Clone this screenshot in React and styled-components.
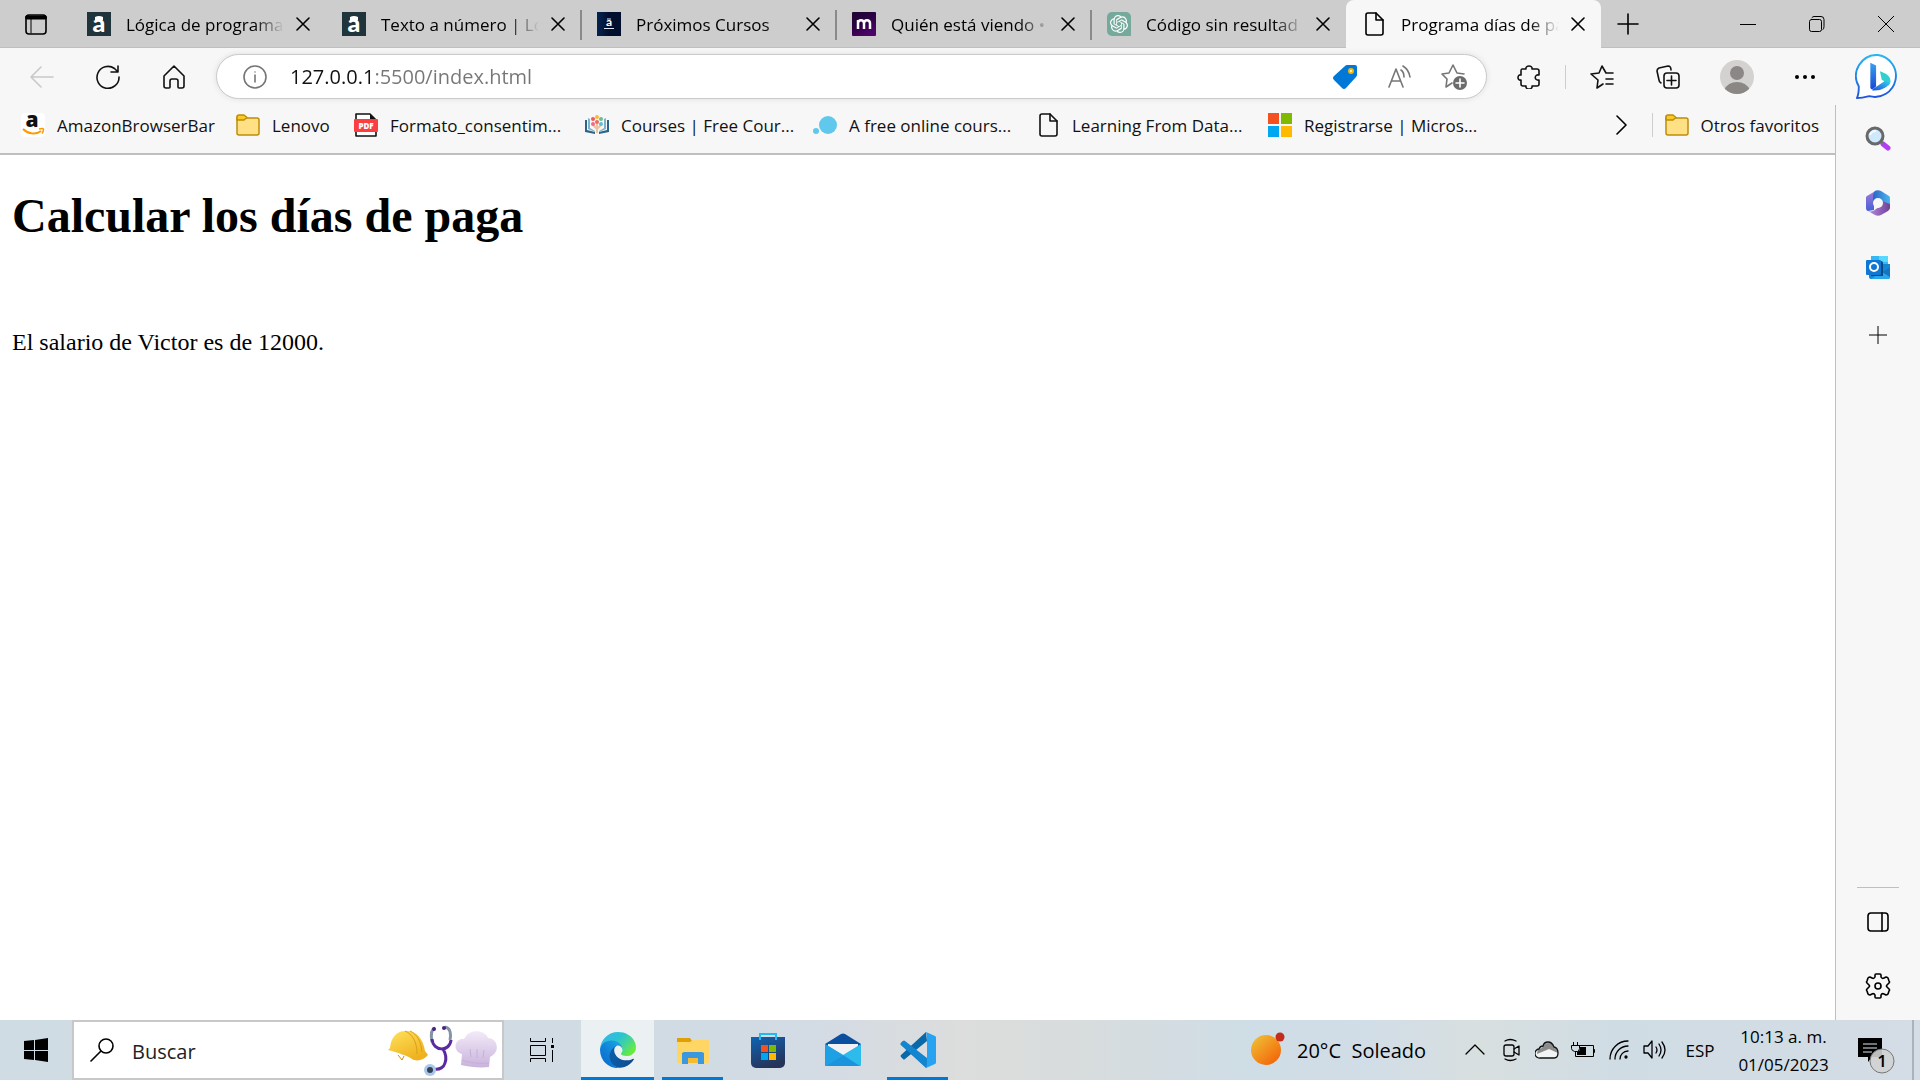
import React from "react";
import styled, { createGlobalStyle } from "styled-components";
import { SiOpenai } from "react-icons/si";

const GlobalStyle = createGlobalStyle`
  * {
    box-sizing: border-box;
  }
  body {
    margin: 0;
    font-family: "Open Sans", "Noto Sans", sans-serif;
    color: #000;
  }
  button, input {
    font: inherit;
    color: inherit;
    border: 0;
    padding: 0;
    background: none;
    outline: none;
  }
  svg {
    display: block;
    flex: none;
  }
`;

const Line = ({ size = 24, width = 1.6, children, ...rest }) => (
  <svg
    width={size}
    height={size}
    viewBox={`0 0 ${size} ${size}`}
    fill="none"
    stroke="currentColor"
    strokeWidth={width}
    strokeLinecap="round"
    strokeLinejoin="round"
    aria-hidden="true"
    {...rest}
  >
    {children}
  </svg>
);

/* ---------- favicons ---------- */

const AluraIcon = () => (
  <svg width="24" height="24" viewBox="0 0 24 24">
    <rect width="24" height="24" fill="#20343c" />
    <text x="12" y="20" textAnchor="middle" fontSize="25" fontWeight="900" fill="#fff" fontFamily="Lato, sans-serif">
      a
    </text>
    <path d="M8 5q4-2 8 0v3H8z" fill="#fff" />
  </svg>
);

const LatamIcon = () => (
  <svg width="24" height="24" viewBox="0 0 24 24">
    <defs>
      <linearGradient id="latam">
        <stop offset="0" stopColor="#052452" />
        <stop offset="0.5" stopColor="#010f2e" />
      </linearGradient>
    </defs>
    <rect width="24" height="24" fill="url(#latam)" />
    <text x="12" y="14" textAnchor="middle" fontSize="12" fontWeight="700" fill="#fff" fontFamily="Lato, sans-serif">
      a
    </text>
    <path d="M10 7h4M7 16.500h10" stroke="#dfe4ee" strokeWidth="1" />
  </svg>
);

const MIcon = () => (
  <svg width="24" height="24" viewBox="0 0 24 24">
    <defs>
      <linearGradient id="mbg" x2="0.6" y2="1">
        <stop offset="0" stopColor="#1d0530" />
        <stop offset="0.5" stopColor="#2b0142" />
        <stop offset="1" stopColor="#4d0569" />
      </linearGradient>
    </defs>
    <rect width="24" height="24" rx="1" fill="url(#mbg)" />
    <path
      d="M6 17V8M6 11.500C6 7 12 7 12 11.500V17M12 11.500C12 7 18 7 18 11.500V17"
      fill="none"
      stroke="#fff"
      strokeWidth="2.500"
    />
  </svg>
);

const GptBox = styled.span`
  display: grid;
  place-items: center;
  flex: none;
  width: 24px;
  height: 24px;
  border-radius: 5px 5px 0 5px;
  background: #75a99c;
  color: #fff;
`;

const PageIcon = () => (
  <Line>
    <path d="M6 1h8l7 7v13a2 2 0 0 1-2 2H6a2 2 0 0 1-2-2V3a2 2 0 0 1 2-2z" />
    <path d="M14 1v7h7" />
  </Line>
);

const AmazonIcon = () => (
  <svg width="24" height="24" viewBox="0 0 24 24">
    <rect width="24" height="24" rx="4" fill="#fff" />
    <text x="11" y="14" textAnchor="middle" fontSize="21" fontWeight="800" fill="#111" fontFamily="Open Sans, sans-serif">
      a
    </text>
    <path d="M2 16c5 5 13 6 18 2" fill="none" stroke="#f90" strokeWidth="2" />
    <path d="M18 16c3-1 4.500-.5 4.500 0s0 3-1.500 4.500" fill="none" stroke="#f90" strokeWidth="1.500" />
  </svg>
);

const FolderIcon = () => (
  <svg width="24" height="24" viewBox="0 0 24 24" stroke="#bd8d09" strokeWidth="1.500" strokeLinejoin="round">
    <path d="M1 5c0-1 1-2 2-2h5l3 2h10c1 0 2 1 2 2v13c0 1-1 2-2 2H3c-1 0-2-1-2-2z" fill="#ffe084" />
    <path d="M1 7V4c0-1 1-2 2-2h5l3 2.500L8 7z" fill="#fbc926" />
  </svg>
);

const PdfIcon = () => (
  <svg width="24" height="24" viewBox="0 0 24 24">
    <path d="M2 1h14l6 6v16H2z" fill="#fff" stroke="#111" strokeWidth="1.600" strokeLinejoin="round" />
    <path d="M16 1v6h6z" fill="#111" />
    <rect y="6" width="24" height="13" rx="1" fill="#fb3e40" />
    <text x="12" y="16" textAnchor="middle" fontSize="8" fontWeight="800" fill="#fff" fontFamily="Open Sans, sans-serif">
      PDF
    </text>
  </svg>
);

const CoursesIcon = () => (
  <svg width="24" height="24" viewBox="0 0 24 24">
    <path d="M0 7h2v10l8 2v2l-10-2zM24 7h-2v10l-8 2v2l10-2z" fill="#2d6488" />
    <path d="M3 5l2 1v9l5 3v1l-7-3zM21 5l-2 1v9l-5 3v1l7-3z" fill="#7fb2cc" />
    <path d="M12 20v-9M12 16l-4-4M12 16l4-4" stroke="#ecc39b" strokeWidth="2" />
    <circle cx="8" cy="6" r="2" fill="#f15a4e" />
    <circle cx="12" cy="4" r="2" fill="#f7b844" />
    <circle cx="16" cy="6" r="2" fill="#67c18c" />
    <circle cx="8" cy="11" r="2" fill="#ef6a86" />
    <circle cx="16" cy="11" r="2" fill="#59bde0" />
    <circle cx="12" cy="9" r="2" fill="#ed6b5b" />
  </svg>
);

const BubblesIcon = () => (
  <svg width="24" height="24" viewBox="0 0 24 24">
    <circle cx="15" cy="12" r="9" fill="#5fc8ec" />
    <circle cx="3" cy="18" r="3" fill="#5fc8ec" />
  </svg>
);

const FourSquares = ({ size = 24 }) => (
  <svg width={size} height={size} viewBox="0 0 24 24">
    <path d="M0 0h11v11H0z" fill="#f4511e" />
    <path d="M13 0h11v11H13z" fill="#7fba00" />
    <path d="M0 13h11v11H0z" fill="#01a6f0" />
    <path d="M13 13h11v11H13z" fill="#ffb901" />
  </svg>
);

/* ---------- coloured product icons ---------- */

const BingIcon = () => (
  <svg width="46" height="46" viewBox="0 0 48 48">
    <defs>
      <linearGradient id="bub" x1="0.5" y1="0" x2="0.5" y2="1">
        <stop offset="0" stopColor="#26b8ee" />
        <stop offset="1" stopColor="#1d53dd" />
      </linearGradient>
      <linearGradient id="bstem" x2="0" y2="1">
        <stop offset="0" stopColor="#3aa0f5" />
        <stop offset="1" stopColor="#1747d1" />
      </linearGradient>
      <linearGradient id="bleaf" x1="0" y1="1" x2="1" y2="0">
        <stop offset="0" stopColor="#1b50da" />
        <stop offset="1" stopColor="#37d7ee" />
      </linearGradient>
    </defs>
    <path
      d="M24 1a22 22 0 1 1-9 43c-4 1-8 2-13 2 2-4 2-7 2-12A22 22 0 0 1 24 1z"
      fill="#fff"
      stroke="url(#bub)"
      strokeWidth="2"
      strokeLinejoin="round"
    />
    <path d="M16 9l6 3v22l-4 3c-1 0-2-1-2-2z" fill="url(#bstem)" />
    <path d="M26 18c6 2 11 5 11 10 0 2-1 4-2 5-1-4-5-5-7-6z" fill="#2fd0cf" />
    <path d="M18 38c8 1 17-3 19-9-2-2-5-2-7 0l-9 6c-2 1-3 2-3 3z" fill="url(#bleaf)" />
  </svg>
);

const LoupeIcon = () => (
  <svg width="26" height="26" viewBox="0 0 26 26">
    <path d="M18 18l5 4" stroke="#b43cf5" strokeWidth="5" strokeLinecap="round" />
    <path d="M14 14l4 4" stroke="#777" strokeWidth="3" />
    <circle cx="10" cy="10" r="8" fill="#cfe8fb" stroke="#66686b" strokeWidth="3" />
    <path d="M5 9c1-3 3-4 6-4" stroke="#f5fbff" strokeWidth="2" fill="none" />
  </svg>
);

const OfficeIcon = () => (
  <svg width="26" height="26" viewBox="0 0 26 26">
    <defs>
      <linearGradient id="of1" x2="0" y2="1">
        <stop offset="0" stopColor="#a67bdc" />
        <stop offset="1" stopColor="#4561d6" />
      </linearGradient>
      <linearGradient id="of2">
        <stop offset="0" stopColor="#2866c8" />
        <stop offset="1" stopColor="#4cb5ee" />
      </linearGradient>
      <linearGradient id="of3">
        <stop offset="0" stopColor="#b78ae2" />
        <stop offset="1" stopColor="#704097" />
      </linearGradient>
    </defs>
    <path d="M12 0L2 6c-1 1-1 1-1 2v10c0 2 1 3 2 3l6-1V9c0-4 1-6 3-9z" fill="url(#of1)" />
    <path d="M10 1c2-1 4-1 6 0l8 5c1 1 1 1 1 3v9l-8-6v-1l-4-2-5 2V6c0-2 1-4 2-5z" fill="url(#of2)" />
    <path d="M25 14v4c0 1-1 2-2 3l-7 4c-2 1-4 1-6 0l-7-4c3 1 6 0 8-2l6-4V11z" fill="url(#of3)" />
    <circle cx="13" cy="13" r="5" fill="#f7f7f7" />
  </svg>
);

const OutlookIcon = () => (
  <svg width="24" height="24" viewBox="0 0 24 24">
    <path d="M5 1h17v14H5z" fill="#35b8f1" />
    <path d="M13 1h9v6h-9z" fill="#57d8ff" />
    <path d="M3 9h21v13a2 2 0 0 1-2 2H5a2 2 0 0 1-2-2z" fill="#1387d6" />
    <path d="M24 12L5 24h17a2 2 0 0 0 2-2z" fill="#28a8ea" />
    <path d="M24 12v10l-8-5z" fill="#1274c2" />
    <path d="M5 6h10a2 2 0 0 1 2 2v13H5z" fill="#0a4a80" />
    <rect y="5" width="15" height="15" rx="1" fill="#0f78d4" />
    <circle cx="8" cy="12" r="4" fill="none" stroke="#fff" strokeWidth="2" />
  </svg>
);

const EdgeIcon = () => (
  <svg width="36" height="36" viewBox="0 0 256 256">
    <defs>
      <linearGradient id="e1" x1="0.2" x2="1">
        <stop offset="0" stopColor="#0c59a4" />
        <stop offset="1" stopColor="#114a8b" />
      </linearGradient>
      <linearGradient id="e2" x1="0.9" y1="0.3" x2="0.3" y2="1">
        <stop offset="0" stopColor="#1b9de2" />
        <stop offset="0.5" stopColor="#0f82d8" />
        <stop offset="1" stopColor="#0b6fd0" />
      </linearGradient>
      <linearGradient id="e3" x2="1" y2="0.6">
        <stop offset="0" stopColor="#35b4ee" />
        <stop offset="0.5" stopColor="#2bc3d2" />
        <stop offset="0.8" stopColor="#4bd889" />
        <stop offset="1" stopColor="#66eb3e" />
      </linearGradient>
    </defs>
    <path
      fill="url(#e1)"
      d="M235.680 190.460a93.730 93.730 0 0 1-10.540 4.710 101.870 101.870 0 0 1-35.900 6.460c-47.320 0-88.540-32.550-88.540-74.320A31.480 31.480 0 0 1 117.130 99.900c-42.800 1.800-53.800 46.400-53.800 72.530 0 73.880 68.090 81.370 82.760 81.370 7.910 0 19.840-2.300 27-4.560l1.310-.44a128.340 128.340 0 0 0 66.600-52.800 4 4 0 0 0-5.320-5.540z"
    />
    <path
      fill="url(#e2)"
      d="M105.730 241.420A79.200 79.200 0 0 1 83 220.080a80.720 80.720 0 0 1 29.490-119.200c3.200-1.500 8.470-4.130 15.540-4a32.350 32.350 0 0 1 25.690 13 31.880 31.880 0 0 1 6.360 18.660c0-.21 24.460-79.600-80-79.600-43.900 0-80 41.660-80 78.210a130.150 130.150 0 0 0 12.110 56 128 128 0 0 0 156.380 67.110 75.550 75.550 0 0 1-62.780-8z"
    />
    <path
      fill="url(#e3)"
      d="M152.290 148.860c-.81 1.050-3.300 2.500-3.300 5.660 0 2.610 1.700 5.120 4.720 7.230 14.380 10 41.490 8.680 41.560 8.680a59.560 59.560 0 0 0 30.270-8.350 61.380 61.380 0 0 0 30.430-52.880c.26-22.410-8-37.310-11.340-43.910C223.440 23.840 177.720 0 128 0A128 128 0 0 0 0 126.200c.48-36.540 36.800-66.050 80-66.050 3.500 0 23.460.34 42 10.070 16.340 8.580 24.900 18.940 30.850 29.210 6.180 10.670 7.280 24.150 7.280 29.520s-2.740 13.330-7.840 19.910z"
    />
  </svg>
);

const ExplorerIcon = () => (
  <svg width="36" height="36" viewBox="0 0 36 36">
    <path d="M2 6h13l2 3v6H2z" fill="#e0a004" />
    <path d="M2 10h13l3-2h15a1 1 0 0 1 1 1v21a2 2 0 0 1-2 1H4a2 2 0 0 1-2-1z" fill="#ffd563" />
    <path d="M12 26h11v5H12z" fill="#f7bb32" />
    <path d="M7 32V21l2-1h18l2 1v11h-6v-6H13v6z" fill="#3b97de" />
  </svg>
);

const StoreIcon = () => (
  <svg width="36" height="36" viewBox="0 0 36 36">
    <defs>
      <linearGradient id="st" x2="0.4" y2="1">
        <stop offset="0" stopColor="#0e64b4" />
        <stop offset="1" stopColor="#27345a" />
      </linearGradient>
    </defs>
    <path d="M1 5h34v26a5 5 0 0 1-5 5H6a5 5 0 0 1-5-5z" fill="url(#st)" />
    <path d="M10 8V2h16v6" fill="none" stroke="#22b9f2" strokeWidth="2" />
    <path d="M11 13h7v7h-7z" fill="#f4511e" />
    <path d="M19 13h7v7h-7z" fill="#7fba00" />
    <path d="M11 21h7v7h-7z" fill="#01a6f0" />
    <path d="M19 21h7v7h-7z" fill="#ffb901" />
  </svg>
);

const MailIcon = () => (
  <svg width="36" height="36" viewBox="0 0 36 36">
    <path d="M0 12L16 2q2-1 4 0l16 10v4H0z" fill="#0c4f9e" />
    <path d="M3 12h30v12H3z" fill="#f2f2f4" />
    <path d="M0 12l18 11 18-11v21a1 1 0 0 1-1 1H1a1 1 0 0 1-1-1z" fill="#2dbbec" />
    <path d="M0 34l18-11 17 11z" fill="#1c94dd" />
    <path d="M0 12l18 11L1 34a1 1 0 0 1-1-1z" fill="#1da1e4" />
  </svg>
);

const CodeIcon = () => (
  <svg width="36" height="36" viewBox="0 0 36 36">
    <path d="M3 9L1 11q-1 1 0 2l25 23 1-9z" fill="#0e7cc4" />
    <path d="M27 9L5 27q-1 1-2 0l-2-2q-1-1 0-2L26 0z" fill="#0868a9" />
    <path d="M3 9q1-1 2 0l22 17v10L1 13q-1-1 0-2z" fill="#1485cf" />
    <path d="M26 0l9 4q1 0 1 2v24q0 2-1 2l-9 4 1-4V4z" fill="#27a3f2" />
  </svg>
);

const HeroesArt = () => (
  <svg width="110" height="56" viewBox="0 -3 110 56">
    <defs>
      <linearGradient id="helmet" x2="0.6" y2="1">
        <stop offset="0" stopColor="#ffe25e" />
        <stop offset="1" stopColor="#efb11d" />
      </linearGradient>
      <linearGradient id="hat" x2="0" y2="1">
        <stop offset="0" stopColor="#f2eaf8" />
        <stop offset="1" stopColor="#c9b3dc" />
      </linearGradient>
    </defs>
    <path
      d="M0 25l2-2C3 12 9 5 19 6c10 0 16 8 18 20l3 4c-4 5-11 7-16 4-6-4-14-6-24-9z"
      fill="url(#helmet)"
    />
    <path d="M17 6c7 3 12 10 12 23M22 6c7 3 11 10 12 21" fill="none" stroke="#d9a017" />
    <path d="M10 30l4 5 2-4" stroke="#c98d0d" fill="none" />
    <path d="M47 3c-5 2-4 9-3 14" fill="none" stroke="#8693a6" strokeWidth="3" />
    <path d="M57 2c6 1 6 8 5 13" fill="none" stroke="#8693a6" strokeWidth="3" />
    <path
      d="M44 14c1 13 18 13 19 1M55 24c3 5 4 9 2 14-1 4-5 7-11 6"
      fill="none"
      stroke="#5a2ba0"
      strokeWidth="3"
    />
    <circle cx="46" cy="4" r="2" fill="#45237c" />
    <circle cx="56" cy="3" r="2" fill="#45237c" />
    <circle cx="42" cy="45" r="6" fill="#a9c8e8" />
    <circle cx="42" cy="45" r="3" fill="#344256" />
    <path
      d="M73 40l1-11c-8-2-9-12-1-15 1 0 3 0 4-1 3-9 20-9 23 0 9 0 12 12 5 17l-3 2-1 10c-9 1-19 0-28-2z"
      fill="url(#hat)"
    />
    <path d="M74 35c8 3 19 4 27 3M82 24l1 8M89 24v9M96 25l-1 8" fill="none" stroke="#c5b1d8" />
  </svg>
);

const WindowsLogo = () => (
  <svg width="24" height="24" viewBox="0 0 24 24">
    <path d="M0 3l10-1v10H0zM11 2l13-2v12H11zM0 13h10v9L0 21zM11 13h13v11l-13-2z" />
  </svg>
);

/* ---------- window frame ---------- */

const Screen = styled.div`
  display: flex;
  flex-direction: column;
  min-height: 100vh;
  background: #f7f7f7;
`;

const TabStrip = styled.header`
  display: flex;
  height: 48px;
  background: #cdcdcd;
  box-shadow: inset 0 -1px 0 #bfbfbf;
`;

const TabMenu = styled.button`
  display: grid;
  place-items: center;
  width: 71px;
`;

const Tab = styled.div`
  position: relative;
  display: flex;
  align-items: center;
  flex: 0 1 255px;
  min-width: 0;
  padding: 0 12px 0 16px;
  font-size: 17px;
  background: ${(p) => (p.$active ? "#f7f7f7" : "transparent")};
  border-radius: ${(p) => (p.$active ? "8px 8px 0 0" : "0")};
  &::after {
    content: "";
    position: absolute;
    right: -1px;
    top: 10px;
    height: 30px;
    width: 2px;
    background: ${(p) => (p.$divided ? "#8a8a8a" : "transparent")};
  }
`;

const TabLabel = styled.button`
  flex: 1;
  min-width: 0;
  height: 100%;
  margin-left: 15px;
  text-align: left;
  white-space: nowrap;
  overflow: hidden;
  mask-image: linear-gradient(90deg, #000 calc(100% - 30px), transparent);
`;

const SmallButton = styled.button`
  display: grid;
  place-items: center;
  width: 22px;
  height: 24px;
  margin-left: 8px;
`;

const NewTab = styled.button`
  display: grid;
  place-items: center;
  width: 54px;
`;

const WindowButtons = styled.div`
  display: flex;
  margin-left: auto;
  button {
    display: grid;
    place-items: center;
    width: 69px;
  }
`;

const Body = styled.div`
  flex: 1;
  display: flex;
`;

const Main = styled.div`
  flex: 1;
  min-width: 0;
  display: flex;
  flex-direction: column;
`;

const Toolbar = styled.div`
  display: flex;
  align-items: center;
  height: 57px;
  padding-left: 9px;
`;

const ToolButton = styled.button`
  display: grid;
  place-items: center;
  flex: none;
  width: ${(p) => p.$width || 66}px;
  height: 45px;
  color: ${(p) => p.$color || "#111"};
`;

const Divider = styled.span`
  flex: none;
  width: 1px;
  height: 24px;
  margin: 0 ${(p) => p.$gap}px;
  background: #cdcdcd;
`;

const AddressBar = styled.form`
  flex: 1;
  display: flex;
  align-items: center;
  height: 45px;
  margin: 0 9px;
  padding: 0 5px 0 26px;
  border: 1px solid #cacaca;
  border-radius: 23px;
  background: #fff;
  box-shadow: 0 0 6px rgba(0, 0, 0, 0.1);
  color: #767676;
  input {
    flex: 1;
    min-width: 0;
    height: 100%;
    margin-left: 23px;
    font-size: 20px;
    /* the host is dark, the port and path are grey */
    background: linear-gradient(90deg, #111 82px, #767676 82px);
    background-clip: text;
    color: transparent;
  }
`;

const Avatar = styled.span`
  display: block;
  width: 34px;
  height: 34px;
  border-radius: 50%;
  overflow: hidden;
  background: #d4d2d0;
`;

const Favorites = styled.nav`
  display: flex;
  align-items: center;
  height: 50px;
  padding: 0 17px 8px 21px;
  border-bottom: 2px solid #bfbfbf;
  font-size: 17px;
`;

const Favorite = styled.a`
  display: flex;
  align-items: center;
  gap: 12px;
  flex: none;
  width: ${(p) => (p.$width ? p.$width + "px" : "auto")};
  color: #111;
  text-decoration: none;
  white-space: nowrap;
`;

const More = styled.button`
  display: grid;
  place-items: center;
  width: 36px;
  height: 32px;
  margin-left: auto;
`;

const Page = styled.main`
  flex: 1;
  padding: 0 12px;
  background: #fff;
  border-right: 1px solid #bfbfbf;
  font-family: "Liberation Serif", serif;
  font-size: 24px;
  h1 {
    margin: 33px 0 84px;
    font-size: 48px;
    line-height: 56px;
  }
  p {
    margin: 0;
    line-height: 28px;
  }
`;

const SideBar = styled.aside`
  display: flex;
  flex-direction: column;
  width: 84px;
`;

const SideNav = styled.div`
  flex: 1;
  display: flex;
  flex-direction: column;
  align-items: center;
  margin-left: -1px;
  padding: 2px 0 2px;
  border-left: 1px solid #bfbfbf;
`;

const BingCell = styled.button`
  display: grid;
  place-items: center;
  height: 57px;
`;

const SideButton = styled.button`
  display: grid;
  place-items: center;
  width: 60px;
  height: 64px;
`;

const AddButton = styled(SideButton)`
  height: 72px;
`;

const SideRule = styled.hr`
  width: 42px;
  margin: auto 0 2px;
  border: 0;
  border-top: 1px solid #bfbfbf;
`;

/* ---------- taskbar ---------- */

const TaskBar = styled.footer`
  display: flex;
  height: 60px;
  background: linear-gradient(
    90deg,
    #cfdce4 0%,
    #d1dbe3 35%,
    #d3dbe5 42%,
    #dcdddc 50%,
    #d8dcdd 56%,
    #cfdde6 65%,
    #d2dde6 72%,
    #d8dfdf 77%,
    #d0dce4 84%,
    #d4dce6 100%
  );
`;

const TaskButton = styled.button`
  display: grid;
  place-items: center;
  width: ${(p) => p.$width || 75}px;
`;

const SearchBox = styled.label`
  display: flex;
  align-items: center;
  width: 432px;
  padding: 0 4px 0 16px;
  border: 2px solid #c8c8c8;
  background: #fff;
  input {
    flex: 1;
    min-width: 0;
    margin-left: 18px;
    padding-top: 2px;
    font-size: 20px;
  }
  input::placeholder {
    color: #222;
    opacity: 1;
  }
`;

const AppButton = styled.button`
  display: grid;
  place-items: center;
  width: ${(p) => (p.$focused ? 73 : 61)}px;
  margin: 0 ${(p) => (p.$focused ? 1 : 7)}px;
  background: ${(p) => (p.$focused ? "#ebf0f3" : "transparent")};
  box-shadow: ${(p) => (p.$running ? "inset 0 -3px 0 #0078d7" : "none")};
`;

const Tray = styled.div`
  display: flex;
  margin-left: auto;
`;

const Weather = styled.button`
  display: flex;
  align-items: center;
  gap: 10px;
  width: 218px;
  padding-left: 12px;
  font-size: 20px;
  white-space: pre;
`;

const Language = styled.button`
  width: 54px;
  font-size: 17px;
`;

const Clock = styled.button`
  width: 113px;
  padding-top: 2px;
  font-size: 17px;
  line-height: 28px;
  white-space: nowrap;
`;

const ShowDesktop = styled.button`
  width: 8px;
  border-left: 2px solid #a9b3bf;
`;

const CloseGlyph = () => (
  <Line size={14}>
    <path d="M1 1l12 12M13 1L1 13" />
  </Line>
);

const tabs = [
  { title: "Lógica de programa", icon: <AluraIcon /> },
  { title: "Texto a número | Ló", icon: <AluraIcon />, divided: true },
  { title: "Próximos Cursos", icon: <LatamIcon />, divided: true },
  { title: "Quién está viendo •", icon: <MIcon />, divided: true },
  {
    title: "Código sin resultad",
    icon: (
      <GptBox>
        <SiOpenai size={18} />
      </GptBox>
    ),
  },
  { title: "Programa días de pa", icon: <PageIcon />, active: true },
];

const favorites = [
  { label: "AmazonBrowserBar", icon: <AmazonIcon />, width: 215 },
  { label: "Lenovo", icon: <FolderIcon />, width: 118 },
  { label: "Formato_consentim...", icon: <PdfIcon />, width: 231 },
  { label: "Courses | Free Cour...", icon: <CoursesIcon />, width: 228 },
  { label: "A free online cours...", icon: <BubblesIcon />, width: 223 },
  { label: "Learning From Data...", icon: <PageIcon />, width: 232 },
  { label: "Registrarse | Micros...", icon: <FourSquares /> },
];

const App = () => {
  return (
    <Screen>
      <GlobalStyle />
      <TabStrip>
        <TabMenu aria-label="Menú de pestañas">
          <Line>
            <rect x="2" y="3" width="20" height="19" rx="3" />
            <path d="M3 5.500h18" strokeWidth="4" />
            <path d="M7 7v14" strokeWidth="1" />
          </Line>
        </TabMenu>
        {tabs.map((tab) => (
          <Tab key={tab.title} $active={tab.active} $divided={tab.divided}>
            {tab.icon}
            <TabLabel>{tab.title}</TabLabel>
            <SmallButton aria-label="Cerrar pestaña">
              <CloseGlyph />
            </SmallButton>
          </Tab>
        ))}
        <NewTab aria-label="Nueva pestaña">
          <Line size={22}>
            <path d="M11 1v20M1 11h20" />
          </Line>
        </NewTab>
        <WindowButtons>
          <button aria-label="Minimizar">
            <Line size={16} width={1}>
              <path d="M0 8.500h16" />
            </Line>
          </button>
          <button aria-label="Restaurar">
            <Line size={16} width={1}>
              <rect x="0.500" y="3.500" width="12" height="12" rx="2" />
              <path d="M3 1.500q1-1 2-1h7q3 0 3 3v7q0 2-1 3" />
            </Line>
          </button>
          <button aria-label="Cerrar">
            <Line size={16} width={1}>
              <path d="M0 0l16 16M16 0L0 16" />
            </Line>
          </button>
        </WindowButtons>
      </TabStrip>

      <Body>
        <Main>
          <Toolbar>
            <ToolButton $color="#c9c9c9" aria-label="Atrás">
              <Line>
                <path d="M23 12H1M11 2L1 12l10 10" />
              </Line>
            </ToolButton>
            <ToolButton aria-label="Actualizar">
              <Line>
                <path d="M23 12A11 11 0 1 1 18.500 3.500L22 7M22 1v6h-7" />
              </Line>
            </ToolButton>
            <ToolButton aria-label="Inicio">
              <Line>
                <path d="M2 11L12 1l10 10v10q0 2-2 2h-3q-1 0-1-1v-6q0-2-2-2h-4q-2 0-2 2v6q0 1-1 1H4q-2 0-2-2z" />
              </Line>
            </ToolButton>
            <AddressBar onSubmit={(e) => e.preventDefault()}>
              <Line>
                <circle cx="12" cy="12" r="11" />
                <path d="M12 10v7M12 7v0" />
              </Line>
              <input aria-label="Dirección" defaultValue="127.0.0.1:5500/index.html" />
              <ToolButton type="button" $width={55} aria-label="Cupones">
                <svg width="24" height="24" viewBox="0 0 24 24">
                  <path d="M14 0h8q2 0 2 2v8q0 1-1 2L13 23q-2 2-4 0l-8-8q-2-2 0-4L12 1q1-1 2-1z" fill="#0078d7" />
                  <circle cx="18" cy="6" r="2" fill="#fff" stroke="#f5b80a" strokeWidth="2" />
                </svg>
              </ToolButton>
              <ToolButton type="button" $width={55} $color="#767676" aria-label="Leer en voz alta">
                <Line>
                  <path d="M1 22L8 4l7 18M4 16h8M13 5q3 2 3 7M15 1q6 4 7 11" />
                </Line>
              </ToolButton>
              <ToolButton type="button" $width={54} $color="#767676" aria-label="Agregar a favoritos">
                <Line size={26}>
                  <path d="M11 19l-6 4 1-8-5-5 7-1 4-8 4 8 7 1" />
                  <circle cx="19" cy="19" r="7" fill="#6b6b6b" stroke="none" />
                  <path d="M19 15v8M15 19h8" stroke="#fff" />
                </Line>
              </ToolButton>
            </AddressBar>
            <ToolButton aria-label="Extensiones">
              <Line>
                <path d="M5 4h4c-1-4 7-4 6 0h5q2 0 2 2v4c-5-1-5 6 0 5v4q0 2-2 2h-5c1 4-7 4-6 0H6q-2 0-2-2v-4c-4 1-4-6 0-5V6q0-2 1-2z" />
              </Line>
            </ToolButton>
            <Divider $gap={3} />
            <ToolButton aria-label="Favoritos">
              <Line>
                <path d="M13 19l-6 4 1-8-7-6 8-1 3-7 4 7h7M16 14h7M16 19h7" />
              </Line>
            </ToolButton>
            <ToolButton aria-label="Colecciones">
              <Line>
                <rect x="8" y="8" width="15" height="15" rx="3" />
                <path d="M15.500 11v9M11 15.500h9M5 18q-2-1-2-3L1 6q0-2 2-3l9-2q3 0 3 4" />
              </Line>
            </ToolButton>
            <ToolButton $width={72} aria-label="Perfil">
              <Avatar>
                <svg width="34" height="34" viewBox="0 0 34 34" fill="#8b8785">
                  <circle cx="17" cy="13" r="7" />
                  <path d="M4 30q4-8 13-8t13 8v4H4z" />
                </svg>
              </Avatar>
            </ToolButton>
            <ToolButton $width={63} aria-label="Configuración y más">
              <svg width="22" height="6" viewBox="0 0 22 6">
                <circle cx="3" cy="3" r="2" />
                <circle cx="11" cy="3" r="2" />
                <circle cx="19" cy="3" r="2" />
              </svg>
            </ToolButton>
          </Toolbar>

          <Favorites>
            {favorites.map((fav) => (
              <Favorite key={fav.label} href="#" $width={fav.width}>
                {fav.icon}
                {fav.label}
              </Favorite>
            ))}
            <More aria-label="Más favoritos">
              <Line size={20}>
                <path d="M5 1l9 9-9 9" />
              </Line>
            </More>
            <Divider $gap={12} />
            <Favorite href="#">
              <FolderIcon />
              Otros favoritos
            </Favorite>
          </Favorites>

          <Page>
            <h1>Calcular los días de paga</h1>
            <p>El salario de Victor es de 12000.</p>
          </Page>
        </Main>

        <SideBar>
          <BingCell aria-label="Bing">
            <BingIcon />
          </BingCell>
          <SideNav>
            <SideButton aria-label="Buscar">
              <LoupeIcon />
            </SideButton>
            <SideButton aria-label="Microsoft 365">
              <OfficeIcon />
            </SideButton>
            <SideButton aria-label="Outlook">
              <OutlookIcon />
            </SideButton>
            <AddButton aria-label="Personalizar">
              <Line size={18} width={1}>
                <path d="M9 0v18M0 9h18" />
              </Line>
            </AddButton>
            <SideRule />
            <SideButton aria-label="Panel">
              <Line>
                <rect x="2" y="3" width="20" height="18" rx="3" />
                <path d="M16 3v18" />
              </Line>
            </SideButton>
            <SideButton aria-label="Configuración">
              <Line size={26}>
                <circle cx="13" cy="13" r="3" />
                <path d="M10 2q0-1 1-1h4q1 0 1 1v2q1 2 3 1l2-1q1 0 2 1l1 3q1 1 0 2l-2 2q-1 1 0 2l2 2q1 1 0 2l-1 3q-1 1-2 1l-2-1q-2-1-3 1v2q0 1-1 1h-4q-1 0-1-1v-2q-1-2-3-1l-2 1q-1 0-2-1l-1-3q-1-1 0-2l2-2q1-1 0-2l-2-2q-1-1 0-2l1-3q1-1 2-1l2 1q2 1 3-1z" />
              </Line>
            </SideButton>
          </SideNav>
        </SideBar>
      </Body>

      <TaskBar>
        <TaskButton $width={72} aria-label="Inicio">
          <WindowsLogo />
        </TaskButton>
        <SearchBox>
          <Line>
            <circle cx="16" cy="8" r="7" />
            <path d="M11 13L1 23" />
          </Line>
          <input type="text" placeholder="Buscar" aria-label="Buscar" />
          <HeroesArt />
        </SearchBox>
        <TaskButton $width={76} aria-label="Vista de tareas">
          <svg width="24" height="24" viewBox="0 0 24 24" fill="none" stroke="#000">
            <path d="M.5 0v3.500h15V0M.5 7.500h15v10H.5zM.5 24v-3.500h15V24M22.500 0v5M22.500 12v12" />
            <path d="M21 7h3v3h-3z" fill="#000" stroke="none" />
          </svg>
        </TaskButton>
        <AppButton $focused $running aria-label="Microsoft Edge">
          <EdgeIcon />
        </AppButton>
        <AppButton $running aria-label="Explorador de archivos">
          <ExplorerIcon />
        </AppButton>
        <AppButton aria-label="Microsoft Store">
          <StoreIcon />
        </AppButton>
        <AppButton aria-label="Correo">
          <MailIcon />
        </AppButton>
        <AppButton $running aria-label="Visual Studio Code">
          <CodeIcon />
        </AppButton>

        <Tray>
          <Weather>
            <svg width="36" height="36" viewBox="0 0 36 36">
              <defs>
                <linearGradient id="sun" x1="0.1" y1="0.1" x2="0.8" y2="0.9">
                  <stop offset="0" stopColor="#f0bb33" />
                  <stop offset="1" stopColor="#f3690b" />
                </linearGradient>
              </defs>
              <circle cx="15" cy="18" r="15" fill="url(#sun)" />
              <circle cx="29" cy="5" r="4.500" fill="#c42b1c" />
            </svg>
            {"20°C  Soleado"}
          </Weather>
          <TaskButton $width={36} aria-label="Mostrar iconos ocultos">
            <Line size={20} width={1.3}>
              <path d="M1 14l9-9 9 9" />
            </Line>
          </TaskButton>
          <TaskButton $width={36} aria-label="Cámara">
            <Line width={1.3}>
              <rect x="5" y="7" width="10" height="11" rx="2" />
              <path d="M15 11l5-3v9l-5-3M6 3q5-3 11 0M6 21q5 3 11 0" />
            </Line>
          </TaskButton>
          <TaskButton $width={36} aria-label="OneDrive">
            <svg width="24" height="18" viewBox="0 0 24 18">
              <path d="M5 17a4 4 0 0 1-1-9q1-3 5-3a6 6 0 0 1 10 2q4 1 4 5t-4 5z" fill="#f1f3f4" />
              <path d="M2 13q0-5 5-6 2-5 7-5 4 0 5 5 3 1 4 5l-9-4z" fill="#8b8b8b" />
              <path
                d="M5 17a4 4 0 0 1-1-9q1-3 4-3 1-4 5-4t6 5q4 1 4 6 0 5-4 5z"
                fill="none"
                stroke="#111"
                strokeWidth="1.300"
              />
            </svg>
          </TaskButton>
          <TaskButton $width={36} aria-label="Batería">
            <svg width="24" height="18" viewBox="0 0 24 18" fill="none" stroke="#000">
              <path d="M8 4.500h14.500v11H5.500M22.500 8.500h1v3h-1M2.500 1v3M6.500 1v3M.5 4.500h8v3q0 2-2 3h-3q-3-1-3-3zM4.500 10v5.500h2" />
              <path d="M9 6h6v8H6v-3l3-2z" fill="#000" stroke="none" />
            </svg>
          </TaskButton>
          <TaskButton $width={36} aria-label="Red">
            <Line size={20} width={1.3}>
              <path d="M1 19A18 18 0 0 1 19 1M6 19A13 13 0 0 1 19 6M11 19a8 8 0 0 1 8-8" />
              <circle cx="17" cy="17" r="1" fill="#000" />
            </Line>
          </TaskButton>
          <TaskButton $width={36} aria-label="Volumen">
            <Line width={1.3}>
              <path d="M1 8h4l4-5v17l-4-5H1zM13 9q2 3 0 6M16 6q4 6 0 12M19 4q6 8 0 16" />
            </Line>
          </TaskButton>
          <Language>ESP</Language>
          <Clock>
            10:13 a. m.
            <br />
            01/05/2023
          </Clock>
          <TaskButton $width={72} aria-label="Notificaciones">
            <svg width="40" height="50" viewBox="0 0 40 50">
              <path d="M2 13h24v19H16l-4 5v-5H2z" />
              <path d="M7 19h14M7 23h14M7 27h9" stroke="#dfe5ea" />
              <circle cx="26" cy="36" r="12" fill="#d2d2d2" fillOpacity="0.9" stroke="#777" />
              <text x="26" y="42" textAnchor="middle" fontSize="17" fontWeight="600" fontFamily="Open Sans, sans-serif">
                1
              </text>
            </svg>
          </TaskButton>
          <ShowDesktop aria-label="Mostrar escritorio" />
        </Tray>
      </TaskBar>
    </Screen>
  );
};

export default App;
